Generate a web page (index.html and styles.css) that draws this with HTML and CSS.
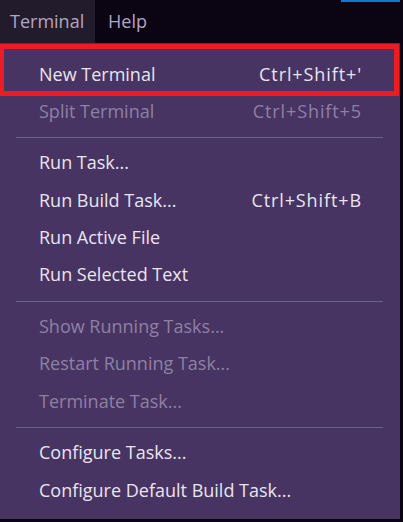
FILE: index.html
```html
<!DOCTYPE html>
<html>
<head>
<meta charset="utf-8">
<link rel="stylesheet" href="styles.css">
</head>
<body>
<div class="menubar">
  <div class="top-item active">Terminal</div>
  <div class="top-item">Help</div>
  <div class="accent"></div>
</div>
<div class="menu">
  <div class="item first"><span>New Terminal</span><span class="key">Ctrl+Shift+'</span><span class="highlight"></span></div>
  <div class="item disabled"><span>Split Terminal</span><span class="key">Ctrl+Shift+5</span></div>
  <div class="sep"></div>
  <div class="item"><span>Run Task...</span></div>
  <div class="item"><span>Run Build Task...</span><span class="key">Ctrl+Shift+B</span></div>
  <div class="item"><span>Run Active File</span></div>
  <div class="item"><span>Run Selected Text</span></div>
  <div class="sep"></div>
  <div class="item disabled"><span>Show Running Tasks...</span></div>
  <div class="item disabled"><span>Restart Running Task...</span></div>
  <div class="item disabled"><span>Terminate Task...</span></div>
  <div class="sep"></div>
  <div class="item"><span>Configure Tasks...</span></div>
  <div class="item"><span>Configure Default Build Task...</span></div>
</div>
</body>
</html>
```
FILE: styles.css
```css
html, body {
  margin: 0;
  padding: 0;
  background: #0b0413;
  font-family: "Open Sans", "Noto Sans", sans-serif;
  font-size: 18px;
}
.menubar {
  display: flex;
  height: 43px;
  width: 400px;
  position: relative;
}
.top-item {
  line-height: 43px;
  padding: 0 13px;
  color: #b3a5c4;
}
.top-item.active {
  background: #221b2c;
  width: 72px;
  padding: 0 13px 0 10px;
}
.accent {
  position: absolute;
  top: 0;
  left: 341px;
  width: 59px;
  height: 2px;
  background: #0a78d4;
}
.menu {
  width: 400px;
  background: #473462;
  padding: 12.5px 0 10px;
  box-sizing: content-box;
}
.item {
  position: relative;
  display: flex;
  justify-content: space-between;
  height: 37.3px;
  line-height: 37.3px;
  padding: 0 39px 0 39px;
  color: #e9e5ee;
  white-space: nowrap;
}
.key {
  letter-spacing: 0.9px;
  margin-right: -1px;
}
.item.disabled {
  color: #8e80a5;
}
.sep {
  height: 1px;
  margin: 7px 17px 6.4px 16px;
  background: #6f628a;
}
.highlight {
  position: absolute;
  left: -1px;
  top: -11.5px;
  width: 400px;
  height: 52px;
  border: 5px solid #ec1c24;
  box-sizing: border-box;
}
```
